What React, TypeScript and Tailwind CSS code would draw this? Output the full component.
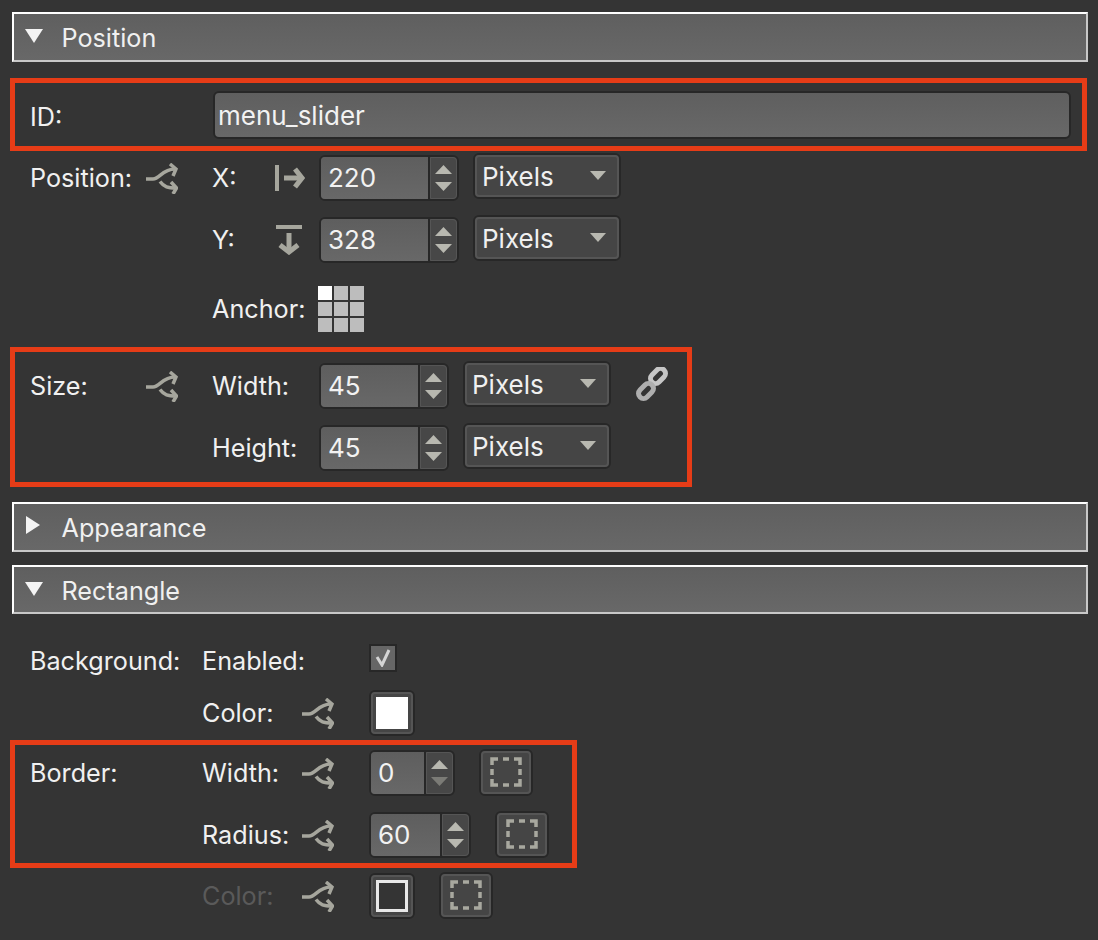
import React from "react";

function SectionHeader({ title, open, className = "" }: { title: string; open: boolean; className?: string }) {
  return (
    <div
      className={`ml-3 flex w-[1076px] items-center border-2 border-t-white border-l-white border-r-[#c8c8c8] border-b-[#c8c8c8] bg-linear-to-b from-[#5f5f5f] to-[#686868] pl-[10px] ${className}`}
    >
      <div className="flex w-[37.500px] justify-start">
        {open ? (
          <svg width="20" height="16" viewBox="0 0 20 16" className="-mt-[2px]">
            <polygon points="1,1 19,1 10,15" fill="#f4f4f4" />
          </svg>
        ) : (
          <svg width="16" height="20" viewBox="0 0 16 20" className="-mt-[4px] ml-[1px]">
            <polygon points="1,1 15,10 1,19" fill="#f4f4f4" />
          </svg>
        )}
      </div>
      <span className="pt-[4px] text-[25.200px] text-[#f0f0f0]">{title}</span>
    </div>
  );
}

function SplitIcon() {
  return (
    <svg width="32" height="31" viewBox="0 0 32 31" fill="none" stroke="#a6a69d" strokeWidth="3.500" className="shrink-0">
      <path d="M0 16 H7 C14 16 16 6 29 6" />
      <path d="M24 1 L30 6 L27 13" />
      <path d="M14 18.500 C18 24 22 25 30 25" />
      <path d="M25 19 L30.500 25 L27 31" />
    </svg>
  );
}

function ArrowRightBar() {
  return (
    <svg width="30" height="26" viewBox="0 0 30 26" fill="none" stroke="#a6a69d" className="shrink-0">
      <path d="M2 0 V26" strokeWidth="4" />
      <path d="M9 13 H26" strokeWidth="5" />
      <path d="M20 4 L27 13 L20 22" strokeWidth="5" />
    </svg>
  );
}

function ArrowDownBar() {
  return (
    <svg width="26" height="30" viewBox="0 0 26 30" fill="none" stroke="#a6a69d" className="shrink-0">
      <path d="M0 2 H26" strokeWidth="4" />
      <path d="M13 8 V26" strokeWidth="5" />
      <path d="M4 20 L13 27 L22 20" strokeWidth="5" />
    </svg>
  );
}

function SpinInput({ value, width, dimDown }: { value: string; width: string; dimDown?: boolean }) {
  return (
    <div className={`flex h-[46px] ${width} shrink-0 rounded-[6px] border-2 border-[#272727] bg-[#474747]`}>
      <div className="flex flex-1 items-center rounded-l-[4px] border-r-2 border-[#272727] bg-linear-to-b from-[#5e5e5e] to-[#686868] pb-[1px] pl-[7px] text-[26px] text-[#f2f2f2]">
        {value}
      </div>
      <div className="flex w-[27px] flex-col items-center justify-center gap-[8px] rounded-r-[4px] border border-[#555]">
        <svg width="17" height="9" viewBox="0 0 17 9">
          <polygon points="8.500,0 17,9 0,9" fill="#b8b8b0" />
        </svg>
        <svg width="17" height="9" viewBox="0 0 17 9">
          <polygon points="0,0 17,0 8.500,9" fill={dimDown ? "#7b7b76" : "#b8b8b0"} />
        </svg>
      </div>
    </div>
  );
}

function PixelSelect() {
  return (
    <div className="mb-[4px] ml-[14px] h-[46px] w-[148px] shrink-0 rounded-[6px] border-2 border-[#272727]">
      <div className="flex h-full items-center justify-between rounded-[4px] border-2 border-[#555] bg-[#454545] pl-[5px] pr-[11px] text-[26px] text-[#f0f0f0]">
        <span className="pt-[1px]">Pixels</span>
        <svg width="16" height="9" viewBox="0 0 16 9" className="-mt-[1px]">
          <polygon points="0,0 16,0 8,9" fill="#b8b8b0" />
        </svg>
      </div>
    </div>
  );
}

function DashedIcon() {
  return (
    <svg width="32" height="30" viewBox="0 0 32 30" fill="none" stroke="#a8a89f" strokeWidth="3.500">
      <path d="M2 8 V2 H8" />
      <path d="M24 2 H30 V8" />
      <path d="M2 22 V28 H8" />
      <path d="M24 28 H30 V22" />
      <path d="M13 2 H19" />
      <path d="M13 28 H19" />
      <path d="M2 12 V18" />
      <path d="M30 12 V18" />
    </svg>
  );
}

function DashedButton({ className = "" }: { className?: string }) {
  return (
    <div className={`mb-[2px] h-[47px] w-[54px] shrink-0 rounded-[6px] border-2 border-[#272727] ${className}`}>
      <div className="flex h-full items-center justify-center rounded-[4px] border-2 border-[#555] bg-[#454545]">
        <DashedIcon />
      </div>
    </div>
  );
}

function LinkIcon() {
  return (
    <svg width="34" height="34" viewBox="0 0 34 34" fill="none" className="mb-[4px] ml-[24px] shrink-0">
      <rect x="14.500" y="4" width="17" height="10" rx="5" transform="rotate(-45 23 9)" stroke="#c6c6c6" strokeWidth="5" />
      <rect x="2.500" y="19" width="17" height="10" rx="5" transform="rotate(-45 11 24)" stroke="#aeaeae" strokeWidth="5" />
    </svg>
  );
}

function AnchorGrid() {
  return (
    <div className="grid w-[46px] grid-cols-3 gap-[2px]">
      {Array.from({ length: 9 }).map((_, i) => (
        <div key={i} className={`h-[14px] w-[14px] ${i === 0 ? "bg-white" : "bg-[#bdbdbd]"}`} />
      ))}
    </div>
  );
}

function Swatch({ filled }: { filled: boolean }) {
  return (
    <div className="h-[46px] w-[46px] shrink-0 rounded-[6px] border-2 border-[#272727]">
      <div className="flex h-full items-center justify-center rounded-[4px] border-2 border-[#555] bg-[#454545]">
        <div className={`h-[32px] w-[32px] ${filled ? "bg-white" : "border-[3px] border-[#e8e8e8] bg-[#343434]"}`} />
      </div>
    </div>
  );
}

function Label({ className = "", children }: { className?: string; children: React.ReactNode }) {
  return <span className={`pt-[2px] ${className}`}>{children}</span>;
}

export default function App() {
  return (
    <div className="h-[940px] w-[1098px] overflow-hidden bg-[#343434] pt-3 font-['Inter','Liberation_Sans',sans-serif] text-[25.200px] text-[#f0f0f0]">
      <SectionHeader title="Position" open className="h-[50px]" />

      <div className="ml-[10px] mt-4 flex h-[73px] w-[1077px] items-center border-[5px] border-[#e63c17] pl-[15px]">
        <span className="w-[183px] pt-[6px]">ID:</span>
        <div className="flex h-[48px] w-[858px] items-center rounded-[6px] border-2 border-[#272727] bg-linear-to-b from-[#5f5f5f] to-[#686868] pl-[3px] pt-[1px] text-[26px] text-[#f2f2f2]">
          menu_slider
        </div>
      </div>

      <div className="ml-[30px] mt-[2px] flex h-[50px] items-center">
        <Label className="w-[116px]">Position:</Label>
        <SplitIcon />
        <Label className="ml-[34px] w-[63px]">X:</Label>
        <div className="w-[44px]">
          <ArrowRightBar />
        </div>
        <SpinInput value="220" width="w-[140px]" />
        <PixelSelect />
      </div>
      <div className="ml-[212px] mt-3 flex h-[50px] items-center">
        <Label className="w-[64px]">Y:</Label>
        <div className="w-[43px]">
          <ArrowDownBar />
        </div>
        <SpinInput value="328" width="w-[140px]" />
        <PixelSelect />
      </div>
      <div className="ml-[212px] mt-[21px] flex h-[46px] items-center">
        <Label className="w-[106px]">Anchor:</Label>
        <AnchorGrid />
      </div>

      <div className="ml-[10px] mt-[15px] flex h-[140px] w-[682px] flex-col gap-3 border-[5px] border-[#e63c17] py-[9px] pl-[15px]">
        <div className="flex h-[50px] items-center">
          <Label className="w-[116px]">Size:</Label>
          <SplitIcon />
          <Label className="ml-[34px] w-[107px]">Width:</Label>
          <SpinInput value="45" width="w-[130px]" />
          <PixelSelect />
          <LinkIcon />
        </div>
        <div className="flex h-[50px] items-center">
          <Label className="ml-[182px] w-[107px]">Height:</Label>
          <SpinInput value="45" width="w-[130px]" />
          <PixelSelect />
        </div>
      </div>

      <SectionHeader title="Appearance" open={false} className="mt-[15px] h-[50px]" />
      <SectionHeader title="Rectangle" open className="mt-[13px] h-[49px]" />

      <div className="ml-[30px] mt-[22px] flex h-[50px] items-center">
        <Label className="w-[172px]">Background:</Label>
        <Label className="w-[167px]">Enabled:</Label>
        <div className="mb-[6px] flex h-[28px] w-[28px] items-center justify-center border-2 border-[#272727] bg-[#666]">
          <svg width="18" height="18" viewBox="0 0 18 18" fill="none" stroke="#d4d4d4" strokeWidth="3">
            <path d="M3 8 L8 16 L15 1" />
          </svg>
        </div>
      </div>
      <div className="ml-[202px] mt-[2px] flex h-[50px] items-center">
        <Label className="w-[100px]">Color:</Label>
        <SplitIcon />
        <div className="ml-[35px]">
          <Swatch filled />
        </div>
      </div>

      <div className="ml-[10px] mt-[2px] flex h-[128px] w-[567px] flex-col gap-3 border-[5px] border-[#e63c17] py-[3px] pl-[15px]">
        <div className="flex h-[50px] items-center">
          <Label className="w-[172px]">Border:</Label>
          <Label className="w-[100px]">Width:</Label>
          <SplitIcon />
          <div className="ml-[35px]">
            <SpinInput value="0" width="w-[86px]" dimDown />
          </div>
          <DashedButton className="ml-[24px]" />
        </div>
        <div className="flex h-[50px] items-center">
          <Label className="ml-[172px] w-[100px]">Radius:</Label>
          <SplitIcon />
          <div className="ml-[35px]">
            <SpinInput value="60" width="w-[102px]" />
          </div>
          <DashedButton className="ml-[24px]" />
        </div>
      </div>

      <div className="ml-[202px] mt-[3px] flex h-[50px] items-center">
        <Label className="w-[100px] text-[#5a5a5a]">Color:</Label>
        <SplitIcon />
        <div className="ml-[35px]">
          <Swatch filled={false} />
        </div>
        <DashedButton className="ml-[24px]" />
      </div>
    </div>
  );
}
